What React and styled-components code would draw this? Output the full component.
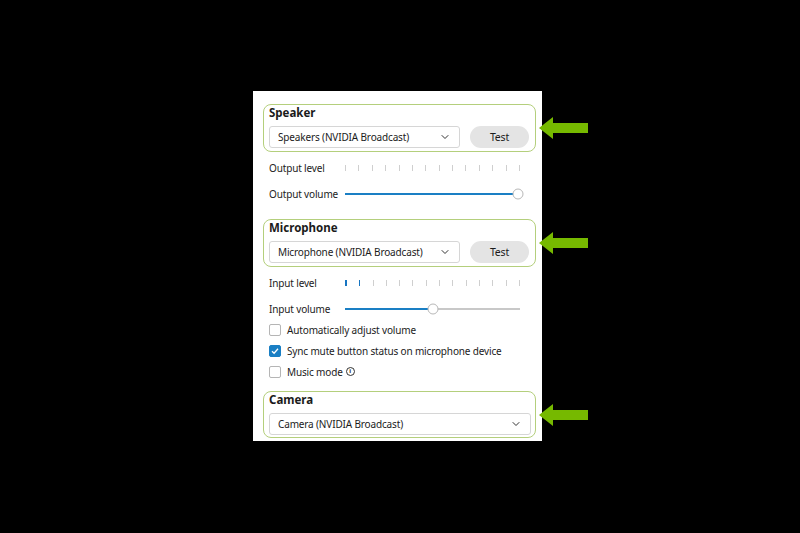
import React from 'react';
import styled, { createGlobalStyle } from 'styled-components';
import { FiChevronDown } from 'react-icons/fi';

const GlobalStyle = createGlobalStyle`
    html, body {
        margin: 0;
        padding: 0;
        background: #000;
        width: 800px;
        height: 533px;
        overflow: hidden;
    }
    body {
        font-family: "Noto Sans", "Open Sans", sans-serif;
        color: #1b1b1b;
        letter-spacing: -0.15px;
    }
`;

const Page = styled.div`
    padding: 91px 0 0 253px;
`;

const Panel = styled.div`
    width: 289px;
    height: 350px;
    box-sizing: border-box;
    background: #fff;
    padding: 13px 6px 0 10px;
    display: flex;
    flex-direction: column;
`;

const Group = styled.div`
    position: relative;
    box-sizing: border-box;
    height: ${p => p.$h || 48}px;
    border: 1px solid #b4cf7c;
    border-radius: 8px;
    padding: 0 5px;
    display: flex;
    flex-direction: column;
    gap: 5px;
    margin-top: ${p => p.$mt || 0}px;
`;

const Title = styled.div`
    font-weight: 700;
    font-size: 11.5px;
    line-height: 16px;
    letter-spacing: 0;
`;

const Controls = styled.div`
    display: flex;
    align-items: center;
    gap: 10px;
`;

const Select = styled.div`
    box-sizing: border-box;
    width: ${p => p.$w}px;
    height: 22px;
    border: 1px solid #d6d6d6;
    border-radius: 3px;
    display: flex;
    align-items: center;
    justify-content: space-between;
    padding: 0 8px 0 8px;
    font-size: 10px;
    svg {
        width: 12px;
        height: 12px;
        color: #333;
    }
`;

const TestButton = styled.div`
    width: 59px;
    height: 22px;
    border-radius: 11px;
    background: #e4e4e4;
    display: flex;
    align-items: center;
    justify-content: center;
    font-size: 10.5px;
`;

const Arrow = styled.svg`
    position: absolute;
    left: calc(100% + 4px);
    top: 50%;
    transform: translateY(-50%);
`;

const Row = styled.div`
    height: ${p => p.$h || 20}px;
    margin-top: ${p => p.$mt || 0}px;
    margin-bottom: ${p => p.$mb || 0}px;
    padding-left: 6px;
    display: flex;
    align-items: center;
    font-size: 10px;
`;

const Label = styled.span`
    width: 76px;
    flex: none;
`;

const Ticks = styled.div`
    display: flex;
    justify-content: space-between;
    width: 175px;
`;

const Tick = styled.span`
    width: ${p => (p.$on ? 1.5 : 1)}px;
    height: 6px;
    background: ${p => (p.$on ? '#1775c2' : '#cfcfcf')};
`;

const Track = styled.div`
    position: relative;
    width: 175px;
    height: 2px;
    background: #c8c8c8;
`;

const Fill = styled.div`
    height: 100%;
    background: #1a7fc4;
`;

const Thumb = styled.span`
    position: absolute;
    top: 50%;
    width: 11px;
    height: 11px;
    box-sizing: border-box;
    border: 1px solid #b8b8b8;
    border-radius: 50%;
    background: #fff;
    transform: translate(-50%, -50%);
`;

const Check = styled.span`
    box-sizing: border-box;
    width: 12px;
    height: 12px;
    border-radius: 2px;
    margin-right: 6px;
    border: 1px solid ${p => (p.$on ? '#1a7fc4' : '#b5b5b5')};
    background: ${p => (p.$on ? '#1a7fc4' : '#fff')};
    display: flex;
    align-items: center;
    justify-content: center;
`;

const Info = styled.span`
    box-sizing: border-box;
    width: 9px;
    height: 9px;
    border: 1px solid #333;
    border-radius: 50%;
    margin-left: 3px;
    font-size: 6px;
    line-height: 7px;
    text-align: center;
    font-weight: 700;
    letter-spacing: 0;
`;

const GreenArrow = () => (
    <Arrow width="49" height="22" viewBox="0 0 49 22">
        <polygon points="0,11 14,0 14,6 49,6 49,16 14,16 14,22" fill="#76b900" />
    </Arrow>
);

const Level = ({ on = 0 }) => (
    <Ticks>
        {Array.from({ length: 14 }).map((_, i) => (
            <Tick key={i} $on={i < on} />
        ))}
    </Ticks>
);

const Slider = ({ value }) => (
    <Track>
        <Fill style={{ width: `${value}%` }} />
        <Thumb style={{ left: `${value}%` }} />
    </Track>
);

const CheckRow = ({ on, children }) => (
    <Row $h={21}>
        <Check $on={on}>
            {on && (
                <svg width="8" height="8" viewBox="0 0 8 8">
                    <path d="M1 4.2 L3.1 6.2 L7 1.8" stroke="#fff" strokeWidth="1.3" fill="none" />
                </svg>
            )}
        </Check>
        {children}
    </Row>
);

const App = () => {
    return (
        <Page>
            <GlobalStyle />
            <Panel>
                <Group>
                    <Title>Speaker</Title>
                    <Controls>
                        <Select $w={191}>
                            Speakers (NVIDIA Broadcast)
                            <FiChevronDown />
                        </Select>
                        <TestButton>Test</TestButton>
                    </Controls>
                    <GreenArrow />
                </Group>
                <Row $mt={6}>
                    <Label>Output level</Label>
                    <Level />
                </Row>
                <Row $mt={6} $mb={15}>
                    <Label>Output volume</Label>
                    <Slider value={99} />
                </Row>

                <Group>
                    <Title>Microphone</Title>
                    <Controls>
                        <Select $w={191}>
                            Microphone (NVIDIA Broadcast)
                            <FiChevronDown />
                        </Select>
                        <TestButton>Test</TestButton>
                    </Controls>
                    <GreenArrow />
                </Group>
                <Row $mt={6}>
                    <Label>Input level</Label>
                    <Level on={2} />
                </Row>
                <Row $mt={6}>
                    <Label>Input volume</Label>
                    <Slider value={50} />
                </Row>
                <CheckRow>Automatically adjust volume</CheckRow>
                <CheckRow on>Sync mute button status on microphone device</CheckRow>
                <CheckRow>
                    Music mode
                    <Info>i</Info>
                </CheckRow>

                <Group $h={47} $mt={9}>
                    <Title>Camera</Title>
                    <Select $w={262}>
                        Camera (NVIDIA Broadcast)
                        <FiChevronDown />
                    </Select>
                    <GreenArrow />
                </Group>
            </Panel>
        </Page>
    );
};

export default App;
